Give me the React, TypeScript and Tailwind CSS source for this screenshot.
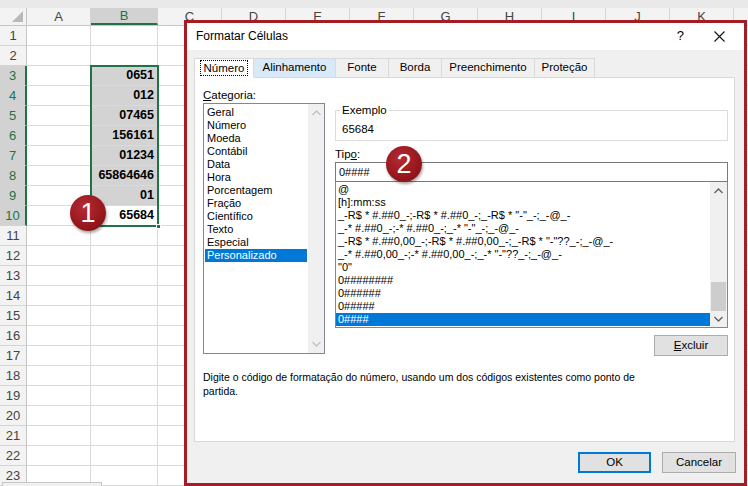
import React from 'react'

const columns = [
  { l: 'A', w: 'w-[64px]' },
  { l: 'B', w: 'w-[67px]' },
  { l: 'C', w: 'w-[64px]' },
  { l: 'D', w: 'w-[64px]' },
  { l: 'E', w: 'w-[64px]' },
  { l: 'F', w: 'w-[64px]' },
  { l: 'G', w: 'w-[64px]' },
  { l: 'H', w: 'w-[64px]' },
  { l: 'I', w: 'w-[64px]' },
  { l: 'J', w: 'w-[64px]' },
  { l: 'K', w: 'w-[64px]' },
  { l: '', w: 'w-[64px]' },
]

const values: Record<number, string> = {
  3: '0651',
  4: '012',
  5: '07465',
  6: '156161',
  7: '01234',
  8: '65864646',
  9: '01',
  10: '65684',
}

const categories = [
  'Geral', 'Número', 'Moeda', 'Contábil', 'Data', 'Hora',
  'Porcentagem', 'Fração', 'Científico', 'Texto', 'Especial', 'Personalizado',
]

const formats = [
  '@',
  '[h]:mm:ss',
  '_-R$ * #.##0_-;-R$ * #.##0_-;_-R$ * "-"_-;_-@_-',
  '_-* #.##0_-;-* #.##0_-;_-* "-"_-;_-@_-',
  '_-R$ * #.##0,00_-;-R$ * #.##0,00_-;_-R$ * "-"??_-;_-@_-',
  '_-* #.##0,00_-;-* #.##0,00_-;_-* "-"??_-;_-@_-',
  '"0"',
  '0########',
  '0######',
  '0#####',
  '0####',
]

const tabs = [
  { label: 'Número', w: 'w-[60px]' },
  { label: 'Alinhamento', w: 'w-[83px]' },
  { label: 'Fonte', w: 'w-[54px]' },
  { label: 'Borda', w: 'w-[54px]' },
  { label: 'Preenchimento', w: 'w-[94px]' },
  { label: 'Proteção', w: 'w-[61px]' },
]

function Chevron({ up, color }: { up?: boolean; color: string }) {
  return (
    <svg width="9" height="6" viewBox="0 0 9 6">
      <polyline
        points={up ? '0.5,5 4.5,1 8.5,5' : '0.5,1 4.5,5 8.5,1'}
        fill="none"
        stroke={color}
        strokeWidth="1.3"
      />
    </svg>
  )
}

function Badge({ n, className }: { n: string; className: string }) {
  return (
    <div
      className={`absolute w-[36px] h-[36px] rounded-full bg-[radial-gradient(circle_at_40%_35%,#b72a31,#8c1219_75%)] shadow-[1px_2px_3px_rgba(0,0,0,0.35)] flex items-center justify-center text-white text-[27px] leading-none ${className}`}
    >
      {n}
    </div>
  )
}

function Sheet() {
  const rows = Array.from({ length: 23 }, (_, i) => i + 1)
  return (
    <div className="flex flex-col">
      <div className="h-[8px] bg-[#e9e9e9]" />
      <div className="flex h-[18px] bg-[#f3f3f3] border-b border-[#c6c6c6]">
        <div className="w-[27px] shrink-0 border-r border-[#c6c6c6] relative">
          <div className="absolute right-[3px] bottom-[3px] w-0 h-0 border-l-[11px] border-l-transparent border-b-[11px] border-b-[#b9b9b9]" />
        </div>
        {columns.map((c, i) => (
          <div
            key={i}
            className={`${c.w} shrink-0 border-r border-[#d4d4d4] flex items-center justify-center text-[13px] ${
              c.l === 'B' ? 'bg-[#d2d2d2] text-[#217346] border-b-2 border-b-[#217346]' : 'text-[#444]'
            }`}
          >
            {c.l}
          </div>
        ))}
      </div>
      {rows.map(r => {
        const sel = r >= 3 && r <= 10
        return (
          <div key={r} className="flex h-[20px]">
            <div
              className={`w-[27px] shrink-0 border-b border-[#d4d4d4] flex items-center justify-center text-[13px] ${
                sel
                  ? 'bg-[#d2d2d2] text-[#217346] border-r-2 border-r-[#217346]'
                  : 'bg-[#f3f3f3] text-[#444] border-r border-r-[#c6c6c6]'
              }`}
            >
              {r}
            </div>
            {columns.map((c, i) => (
              <div
                key={i}
                className={`${c.w} shrink-0 border-r border-b border-[#dadada] flex items-center justify-end pr-[3px] text-[12.5px] font-bold text-black ${
                  c.l === 'B' && r >= 3 && r <= 9 ? 'bg-[#d3d3d3]' : 'bg-white'
                }`}
              >
                {c.l === 'B' ? values[r] : ''}
              </div>
            ))}
          </div>
        )
      })}
    </div>
  )
}

function Dialog() {
  return (
    <div className="absolute left-[184px] top-[20px] w-[563px] h-[466px] border-[3px] border-[#a31d24] bg-[#f0f0f0] flex flex-col text-[11.5px] text-black">
      <div className="h-[27px] bg-white flex items-center pl-[9px] pr-[19px] pb-[1px] shrink-0">
        <span className="text-[12px]">Formatar Células</span>
        <span className="ml-auto text-[13px] mr-[30px]">?</span>
        <svg width="11" height="11" viewBox="0 0 11 11">
          <path d="M0.5 0.5 L10.5 10.5 M10.5 0.5 L0.5 10.5" stroke="#111" strokeWidth="1.1" />
        </svg>
      </div>

      <div className="flex-1 flex flex-col px-[7px] pt-[8px]">
        <div className="flex h-[20px]">
          {tabs.map((t, i) => (
            <div
              key={t.label}
              className={`${t.w} h-[20px] border border-[#d9d9d9] -ml-px first:ml-0 flex items-center justify-center ${
                i === 0 ? 'bg-white border-b-white relative z-10' : i === 1 ? 'bg-[#d8eaf9]' : 'bg-[#f0f0f0]'
              }`}
            >
              {i === 0 ? (
                <span className="border border-dotted border-black px-[3px] leading-[14px]">{t.label}</span>
              ) : (
                t.label
              )}
            </div>
          ))}
        </div>

        <div className="w-[541px] h-[365px] -mt-px bg-white border border-[#d9d9d9] flex flex-col pt-[9px] pl-[8px] pr-[6px]">
          <div className="flex">
            <div className="w-[122px] flex flex-col">
              <div className="h-[16px] leading-[16px]">
                <span className="underline">C</span>ategoria:
              </div>
              <div className="h-[251px] border border-[#828790] flex">
                <div className="flex-1 pt-[2px] pl-[1px] pr-[1px] text-[11px]">
                  {categories.map((c, i) => (
                    <div
                      key={c}
                      className={`h-[13px] leading-[13px] pl-[2px] ${
                        i === categories.length - 1 ? 'bg-[#0078d7] text-white' : ''
                      }`}
                    >
                      {c}
                    </div>
                  ))}
                </div>
                <div className="w-[16px] bg-[#f0f0f0] flex flex-col items-center justify-between py-[6px]">
                  <Chevron up color="#c2c2c2" />
                  <Chevron color="#c2c2c2" />
                </div>
              </div>
            </div>

            <div className="ml-[10px] w-[393px] flex flex-col">
              <fieldset className="mt-[15px] h-[39px] border border-[#dcdcdc] px-[6px]">
                <legend className="ml-[-2px] px-[2px] leading-[16px]">Exemplo</legend>
                <div className="pt-[4px] leading-[14px]">65684</div>
              </fieldset>
              <div className="mt-[6px] h-[15px] leading-[15px]">
                Tip<span className="underline">o</span>:
              </div>
              <div className="h-[20px] border border-[#7a7a7a] bg-white flex items-center pl-[3px] text-[11px]">
                0####
              </div>
              <div className="h-[146px] border border-t-0 border-[#828790] flex">
                <div className="flex-1 pt-[1px] text-[11px] whitespace-nowrap overflow-hidden">
                  {formats.map((f, i) => (
                    <div
                      key={f}
                      className={`h-[13px] leading-[13px] pl-[2px] ${
                        i === formats.length - 1 ? 'bg-[#0078d7] text-white' : ''
                      }`}
                    >
                      {f}
                    </div>
                  ))}
                </div>
                <div className="w-[17px] bg-[#f0f0f0] flex flex-col items-center">
                  <div className="h-[17px] flex items-center justify-center">
                    <Chevron up color="#606060" />
                  </div>
                  <div className="flex-1" />
                  <div className="w-[15px] h-[29px] bg-[#cdcdcd]" />
                  <div className="h-[16px] flex items-center justify-center">
                    <Chevron color="#606060" />
                  </div>
                </div>
              </div>
              <button className="self-end mt-[7px] w-[74px] h-[21px] bg-[#e1e1e1] border border-[#adadad] flex items-center justify-center">
                <span className="underline">E</span>xcluir
              </button>
            </div>
          </div>
          <div className="mt-[14px] leading-[14px] whitespace-nowrap text-[10.5px]">
            Digite o código de formatação do número, usando um dos códigos existentes como ponto de
            <br />
            partida.
          </div>
        </div>

        <div className="flex justify-end gap-[11px] mt-[10px] pr-[1px]">
          <button className="w-[73px] h-[21px] bg-[#e1e1e1] border-2 border-[#0078d7] flex items-center justify-center">
            OK
          </button>
          <button className="w-[74px] h-[21px] bg-[#e1e1e1] border border-[#adadad] flex items-center justify-center">
            Cancelar
          </button>
        </div>
      </div>
    </div>
  )
}

export default function App() {
  return (
    <div className="relative w-[748px] h-[486px] overflow-hidden bg-white font-['Liberation_Sans',Arial,sans-serif]">
      <Sheet />

      <div className="absolute left-[90px] top-[65px] w-[69px] h-[162px] border-2 border-[#217346]" />
      <div className="absolute left-[156px] top-[224px] w-[5px] h-[5px] bg-[#217346] border border-white" />

      <div className="absolute left-[2px] top-[482px] w-[100px] h-[10px] bg-[#f0f0f0] border border-[#c6c6c6]" />

      <Dialog />

      <Badge n="1" className="left-[70px] top-[195px]" />
      <Badge n="2" className="left-[386px] top-[146px]" />
    </div>
  )
}
